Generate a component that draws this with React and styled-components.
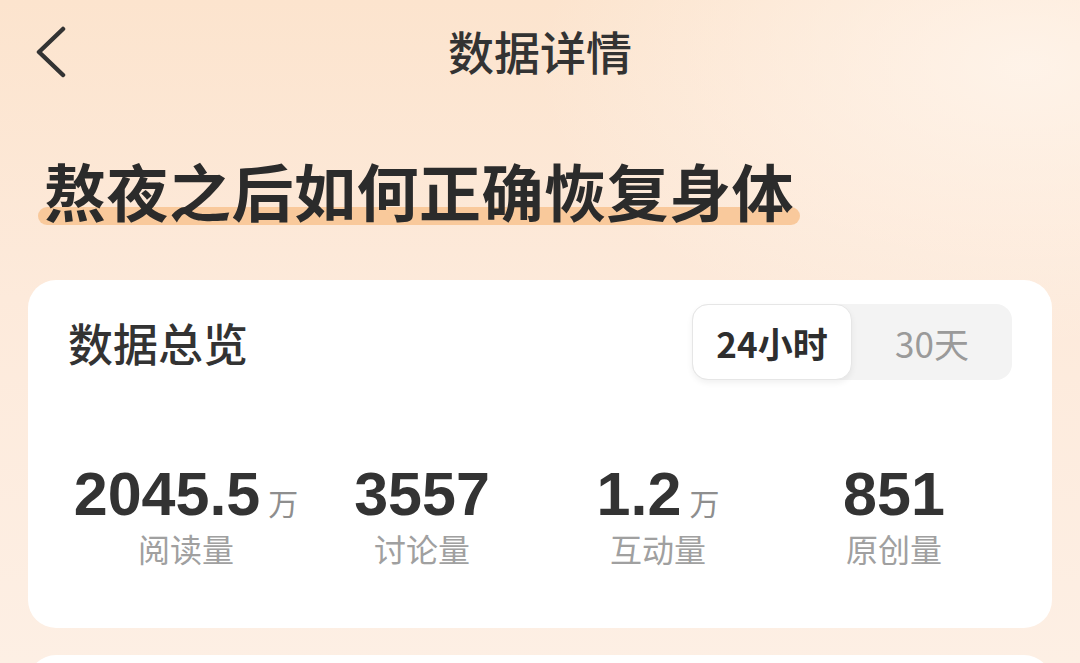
import React, { useState } from "react"
import styled, { createGlobalStyle } from "styled-components"

const GlobalStyle = createGlobalStyle`
  html, body {
    margin: 0;
    padding: 0;
  }
  body {
    font-family: "Liberation Sans", "Noto Sans CJK SC", sans-serif;
    color: #333;
  }
`

const Page = styled.div`
  width: 1080px;
  height: 663px;
  overflow: hidden;
  background:
    radial-gradient(ellipse 700px 400px at 95% 10%, rgba(255, 246, 238, 0.8), rgba(255, 246, 238, 0) 70%),
    linear-gradient(180deg, #fce4ce 0%, #fdeadb 45%, #fdefe4 100%);
`

const NavBar = styled.div`
  position: relative;
  height: 100px;
  display: flex;
  align-items: center;
  justify-content: center;
`

const BackBtn = styled.div`
  position: absolute;
  left: 28px;
  top: 22px;
  width: 44px;
  height: 60px;
  display: flex;
  align-items: center;
  justify-content: center;
`

const NavTitle = styled.div`
  font-family: "Noto Sans CJK SC", sans-serif;
  font-size: 46px;
  font-weight: 500;
  color: #333;
`

const HeadWrap = styled.div`
  padding: 56px 0 0 44px;
  height: 180px;
  box-sizing: border-box;
`

const Headline = styled.span`
  position: relative;
  display: inline-block;
  font-family: "Noto Sans CJK SC", sans-serif;
  font-size: 62px;
  font-weight: 700;
  line-height: 68px;
  color: #2b2b2b;
  letter-spacing: 0.5px;

  &::before {
    content: "";
    position: absolute;
    left: -6px;
    right: -6px;
    bottom: -1px;
    height: 18px;
    border-radius: 9px;
    background: #f8c390;
    opacity: 0.85;
  }

  & > span {
    position: relative;
  }
`

const Card = styled.div`
  margin: 0 28px;
  background: #fff;
  border-radius: 28px;
  padding: 24px 40px 0;
  height: 348px;
  box-sizing: border-box;
`

const NextCard = styled(Card)`
  margin-top: 27px;
  height: 80px;
`

const CardHeader = styled.div`
  display: flex;
  align-items: center;
  justify-content: space-between;
`

const CardTitle = styled.div`
  font-family: "Noto Sans CJK SC", sans-serif;
  font-size: 45px;
  font-weight: 500;
  color: #333;
`

const Toggle = styled.div`
  display: flex;
  width: 320px;
  height: 76px;
  background: #f3f3f3;
  border-radius: 16px;
`

const ToggleItem = styled.div`
  flex: 1;
  display: flex;
  align-items: center;
  justify-content: center;
  border-radius: 16px;
  font-family: "Noto Sans CJK SC", sans-serif;
  font-size: 35px;
  font-weight: ${p => (p.active ? 700 : 400)};
  color: ${p => (p.active ? "#2e2e2e" : "#9a9a9a")};
  background: ${p => (p.active ? "#fff" : "transparent")};
  border: ${p => (p.active ? "1.5px solid #e6e6e6" : "1.5px solid transparent")};
  box-shadow: ${p => (p.active ? "0 3px 6px rgba(0,0,0,0.06)" : "none")};
  cursor: pointer;
`

const Stats = styled.div`
  display: grid;
  grid-template-columns: repeat(4, 1fr);
  margin-top: 82px;
`

const Stat = styled.div`
  display: flex;
  flex-direction: column;
  align-items: center;
`

const Value = styled.div`
  height: 64px;
  font-family: "Liberation Sans", "Noto Sans CJK SC", sans-serif;
  font-size: 61px;
  font-weight: 700;
  line-height: 64px;
  color: #333;
  white-space: nowrap;
`

const Unit = styled.span`
  font-family: "Noto Sans CJK SC", sans-serif;
  font-size: 30px;
  font-weight: 400;
  line-height: 0;
  color: #8e8e8e;
  margin-left: 8px;
`

const Label = styled.div`
  font-family: "Noto Sans CJK SC", sans-serif;
  font-size: 32px;
  line-height: 40px;
  color: #a0a0a0;
  margin-top: 2px;
`

const stats = [
  { value: "2045.5", unit: "万", label: "阅读量" },
  { value: "3557", label: "讨论量" },
  { value: "1.2", unit: "万", label: "互动量" },
  { value: "851", label: "原创量" },
]

function App() {
  const [range, setRange] = useState("24h")

  return (
    <Page>
      <GlobalStyle />
      <NavBar>
        <BackBtn>
          <svg width="34" height="52" viewBox="0 0 34 52">
            <polyline
              points="30,3 6,26 30,49"
              fill="none"
              stroke="#333"
              strokeWidth="4.5"
              strokeLinecap="round"
              strokeLinejoin="round"
            />
          </svg>
        </BackBtn>
        <NavTitle>数据详情</NavTitle>
      </NavBar>

      <HeadWrap>
        <Headline>
          <span>熬夜之后如何正确恢复身体</span>
        </Headline>
      </HeadWrap>

      <Card>
        <CardHeader>
          <CardTitle>数据总览</CardTitle>
          <Toggle>
            <ToggleItem active={range === "24h"} onClick={() => setRange("24h")}>
              24小时
            </ToggleItem>
            <ToggleItem active={range === "30d"} onClick={() => setRange("30d")}>
              30天
            </ToggleItem>
          </Toggle>
        </CardHeader>

        <Stats>
          {stats.map(s => (
            <Stat key={s.label}>
              <Value>
                {s.value}
                {s.unit && <Unit>{s.unit}</Unit>}
              </Value>
              <Label>{s.label}</Label>
            </Stat>
          ))}
        </Stats>
      </Card>

      <NextCard />
    </Page>
  )
}

export default App
